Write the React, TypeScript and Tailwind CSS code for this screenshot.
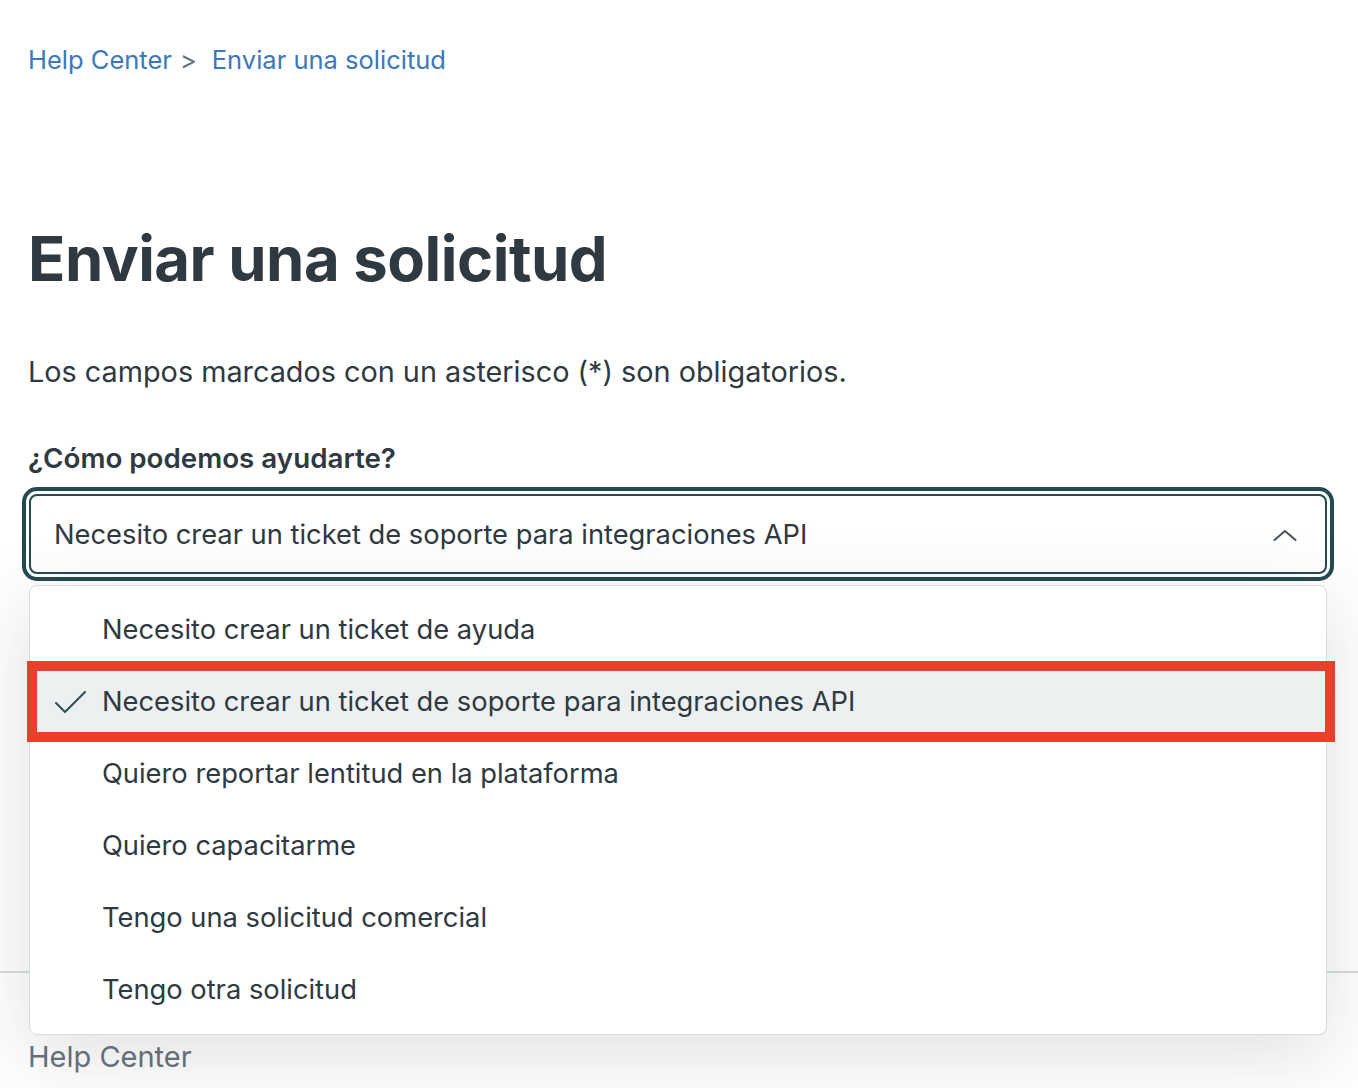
import React from "react";

const options = [
  "Necesito crear un ticket de ayuda",
  "Necesito crear un ticket de soporte para integraciones API",
  "Quiero reportar lentitud en la plataforma",
  "Quiero capacitarme",
  "Tengo una solicitud comercial",
  "Tengo otra solicitud",
];

export default function App() {
  return (
    <div
      className="min-h-[1088px] w-full bg-white overflow-hidden relative text-[#2f3941]"
      style={{ fontFamily: "Inter, 'Noto Sans', sans-serif" }}
    >
      <div className="pl-[28px] pr-[31px]">
        {/* breadcrumb */}
        <nav className="mt-[42px] h-[36px] flex items-center text-[25.5px] leading-[36px]">
          <span className="text-[#3b78bd]">Help Center</span>
          <span className="text-[#68737d] ml-[8px] mr-[15px]">&gt;</span>
          <span className="text-[#3b78bd]">Enviar una solicitud</span>
        </nav>

        <h1 className="mt-[142px] text-[61.6px] leading-[78px] font-bold tracking-[-0.5px] text-[#2f3941]">
          Enviar una solicitud
        </h1>

        <p className="mt-[54px] text-[28.8px] leading-[40px]">
          Los campos marcados con un asterisco (*) son obligatorios.
        </p>

        <label className="block mt-[46px] text-[27.75px] leading-[40px] font-semibold">
          ¿Cómo podemos ayudarte?
        </label>

        <div className="relative mt-[16px] ml-[1px]">
          <div className="h-[80px] rounded-[8px] border-2 border-[#234a4f] bg-white shadow-[0_0_0_3px_#ffffff,0_0_0_7px_#234a4f] flex items-center pl-[23px] pr-[28px]">
            <span className="flex-1 pt-[3px] text-[27.3px]">
              Necesito crear un ticket de soporte para integraciones API
            </span>
            <svg width="24" height="14" viewBox="0 0 24 14" fill="none" className="mt-[2px]">
              <polyline
                points="1.5,12 12,3 22.5,12"
                stroke="#49545c"
                strokeWidth="2"
                strokeLinecap="round"
                strokeLinejoin="round"
              />
            </svg>
          </div>

          {/* dropdown menu */}
          <div className="absolute left-0 right-0 top-[calc(100%+11px)] z-10 rounded-[8px] border border-[#d8dcde] bg-white py-[8px] shadow-[0_20px_80px_rgba(47,57,65,0.16)]">
            {options.map((o, i) => (
              <div
                key={o}
                className={
                  "relative h-[72px] flex items-center pl-[72px] text-[27.3px] " +
                  (i === 1 ? "bg-[#edf0f1]" : "")
                }
              >
                {i === 1 && (
                  <svg
                    className="absolute left-[25px] top-[24px]"
                    width="32"
                    height="24"
                    viewBox="0 0 32 24"
                    fill="none"
                  >
                    <polyline
                      points="1,13 10,22 30,2"
                      stroke="#2a4f55"
                      strokeWidth="2"
                      strokeLinecap="round"
                      strokeLinejoin="round"
                    />
                  </svg>
                )}
                {o}
              </div>
            ))}
            {/* annotation box */}
            <div className="absolute left-[-3px] right-[-9px] top-[75px] h-[81px] border-[10px] border-[#e8402a] pointer-events-none" />
          </div>
        </div>
      </div>

      {/* footer */}
      <footer className="mt-[397px] border-t-2 border-[#d8dcde]">
        <div className="pl-[28px] pt-[66px] text-[29px] leading-[36px] text-[#68737d]">
          Help Center
        </div>
      </footer>
    </div>
  );
}
